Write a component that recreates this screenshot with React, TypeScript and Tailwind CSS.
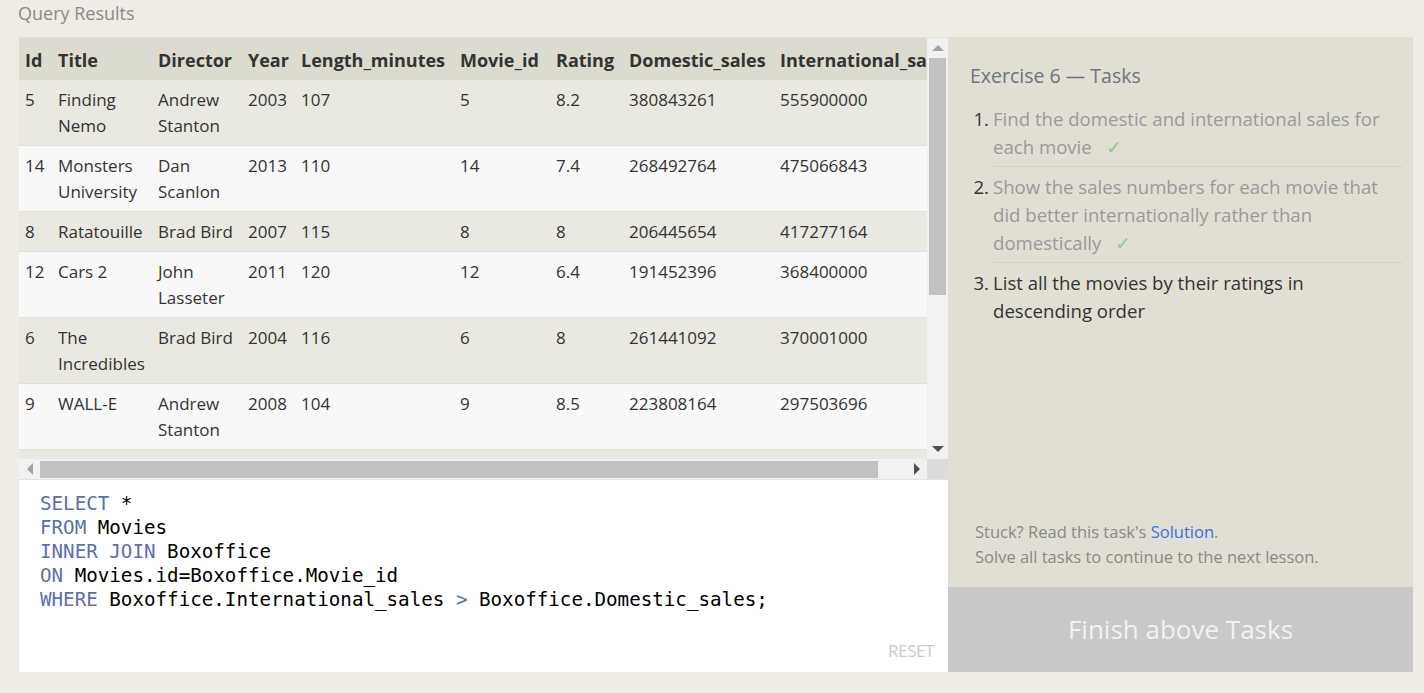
import React from "react";

const rows = [
  ["5", "Finding Nemo", "Andrew Stanton", "2003", "107", "5", "8.2", "380843261", "555900000"],
  ["14", "Monsters University", "Dan Scanlon", "2013", "110", "14", "7.4", "268492764", "475066843"],
  ["8", "Ratatouille", "Brad Bird", "2007", "115", "8", "8", "206445654", "417277164"],
  ["12", "Cars 2", "John Lasseter", "2011", "120", "12", "6.4", "191452396", "368400000"],
  ["6", "The Incredibles", "Brad Bird", "2004", "116", "6", "8", "261441092", "370001000"],
  ["9", "WALL-E", "Andrew Stanton", "2008", "104", "9", "8.5", "223808164", "297503696"],
];

const cols = ["Id", "Title", "Director", "Year", "Length_minutes", "Movie_id", "Rating", "Domestic_sales", "International_sales"];
const widths = [33, 100, 90, 53, 159, 96, 73, 151, 190];

function Arrow({ dir, dark }: { dir: "up" | "down" | "left" | "right"; dark?: boolean }) {
  const pts = {
    up: "0,7 6,1 12,7",
    down: "0,1 6,7 12,1",
    left: "7,0 1,6 7,12",
    right: "1,0 7,6 1,12",
  }[dir];
  const vertical = dir === "up" || dir === "down";
  return (
    <svg width={vertical ? 12 : 8} height={vertical ? 8 : 12} viewBox={vertical ? "0 0 12 8" : "0 0 8 12"}>
      <polygon points={pts} fill={dark ? "#505050" : "#a3a3a3"} />
    </svg>
  );
}

function ResultsTable() {
  return (
    <div className="h-[443px] flex flex-col border-t border-[#e4e2da]">
      <div className="flex h-[421px]">
        {/* table viewport */}
        <div className="w-[908px] h-full overflow-hidden bg-[#e9e8e1]">
          <table className="table-fixed border-collapse w-[945px] text-[17px] text-[#333]">
            <colgroup>
              {widths.map((w, i) => (
                <col key={i} style={{ width: w }} />
              ))}
            </colgroup>
            <thead>
              <tr className="bg-[#dcdbd0] h-[42px]">
                {cols.map((c) => (
                  <th key={c} className="text-left text-[18px] font-bold pl-[6px] pr-[2px] pt-[3px] whitespace-nowrap overflow-hidden">
                    {c}
                  </th>
                ))}
              </tr>
            </thead>
            <tbody>
              {rows.map((r, i) => (
                <tr key={i} className={`border-b border-[#e0dfd8] ${i % 2 === 0 ? "bg-[#e9e8e1]" : "bg-[#f8f8f8]"}`}>
                  {r.map((v, j) => (
                    <td key={j} className="align-top pl-[6px] pr-[4px] pt-[7px] pb-[6px] leading-[26px]">
                      {v}
                    </td>
                  ))}
                </tr>
              ))}
            </tbody>
          </table>
        </div>
        {/* vertical scrollbar */}
        <div className="w-[21px] h-full bg-[#f1f1f1] flex flex-col items-center">
          <div className="h-[20px] flex items-center justify-center">
            <Arrow dir="up" />
          </div>
          <div className="w-[17px] h-[237px] bg-[#c1c1c1]" />
          <div className="flex-1" />
          <div className="h-[21px] flex items-center justify-center">
            <Arrow dir="down" dark />
          </div>
        </div>
      </div>
      {/* horizontal scrollbar */}
      <div className="flex h-[21px] border-b border-[#e4e2da]">
        <div className="w-[908px] bg-[#f1f1f1] flex items-center">
          <div className="w-[21px] flex justify-center">
            <Arrow dir="left" />
          </div>
          <div className="w-[838px] h-[17px] bg-[#c1c1c1]" />
          <div className="flex-1" />
          <div className="w-[21px] flex justify-center">
            <Arrow dir="right" dark />
          </div>
        </div>
        <div className="w-[21px] bg-[#dcdcdc]" />
      </div>
    </div>
  );
}

function Kw({ children }: { children: React.ReactNode }) {
  return <span className="text-[#5b6fb0]">{children}</span>;
}

function Editor() {
  return (
    <div className="h-[192px] bg-white flex flex-col">
      <pre className="pl-[21px] pt-[12px] text-[19.2px] leading-[24px] text-black font-['DejaVu_Sans_Mono',monospace]">
        <Kw>SELECT</Kw> *{"\n"}
        <Kw>FROM</Kw> Movies{"\n"}
        <Kw>INNER JOIN</Kw> Boxoffice{"\n"}
        <Kw>ON</Kw> Movies.id=Boxoffice.Movie_id{"\n"}
        <Kw>WHERE</Kw> Boxoffice.International_sales <Kw>&gt;</Kw> Boxoffice.Domestic_sales;
      </pre>
      <div className="mt-auto self-end pr-[14px] pb-[9px] text-[17px] tracking-tight text-[#cacaca]">RESET</div>
    </div>
  );
}

const tasks = [
  { text: "Find the domestic and international sales for each movie", done: true },
  { text: "Show the sales numbers for each movie that did better internationally rather than domestically", done: true },
  { text: "List all the movies by their ratings in descending order", done: false },
];

function TaskPanel() {
  return (
    <div className="w-[465px] h-[635px] bg-[#e1dfd4] flex flex-col">
      <div className="pl-[22px] pt-[26px] text-[19.5px] leading-[26px] text-[#6d7480]">Exercise 6 — Tasks</div>
      <ol className="pl-[22px] pr-[10px] pt-[10px]">
        {tasks.map((t, i) => (
          <li key={i} className="flex text-[18.6px] leading-[28px]">
            <span className="w-[23px] pr-[4px] text-right pt-[6px] text-[#333]">{i + 1}.</span>
            <div
              className={`flex-1 pt-[6px] pb-[5px] ${i < tasks.length - 1 ? "border-b border-[#d4d2c7]" : ""} ${
                t.done ? "text-[#999]" : "text-[#333]"
              }`}
            >
              {t.text}
              {t.done && <span className="ml-[14px] text-[#86cf8a]">✓</span>}
            </div>
          </li>
        ))}
      </ol>
      <div className="mt-auto pl-[27px] pb-[18px] text-[16.5px] leading-[25px] text-[#888]">
        <div>
          Stuck? Read this task's <span className="text-[#3b6fe0]">Solution</span>.
        </div>
        <div>Solve all tasks to continue to the next lesson.</div>
      </div>
      <div className="h-[85px] bg-[#c8c8c8] flex items-center justify-center text-[26px] text-[#f2f2f2]">
        Finish above Tasks
      </div>
    </div>
  );
}

export default function App() {
  return (
    <div className="w-full h-[693px] bg-[#efece5] font-['Open_Sans',sans-serif]">
      <div className="pl-[18px] h-[37px] text-[18px] text-[#8a8a8a]">Query Results</div>
      <div className="flex ml-[19px]">
        <div className="w-[929px] flex flex-col">
          <ResultsTable />
          <Editor />
        </div>
        <TaskPanel />
      </div>
    </div>
  );
}
